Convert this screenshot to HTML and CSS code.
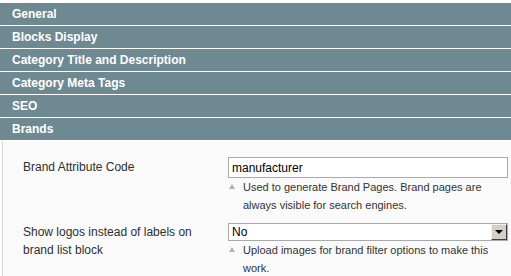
FILE: index.html
```html
<!DOCTYPE html>
<html lang="en">

<head>
    <meta charset="UTF-8">
    <title>Brands configuration</title>
    <link rel="stylesheet" href="styles.css">
</head>

<body>
    <div class="sections">
        <div class="section-head">General</div>
        <div class="section-head">Blocks Display</div>
        <div class="section-head">Category Title and Description</div>
        <div class="section-head">Category Meta Tags</div>
        <div class="section-head">SEO</div>
        <div class="section-head">Brands</div>

        <div class="section-body">
            <div class="form-row">
                <label class="field-label" for="brand-code">Brand Attribute Code</label>
                <div class="field-value">
                    <input type="text" id="brand-code" class="text-input" value="manufacturer">
                    <p class="note">Used to generate Brand Pages. Brand pages are always visible for search engines.</p>
                </div>
            </div>
            <div class="form-row">
                <label class="field-label">Show logos instead of labels on brand list block</label>
                <div class="field-value">
                    <div class="select-box">
                        <span class="select-text">No</span>
                        <span class="select-arrow"></span>
                    </div>
                    <p class="note">Upload images for brand filter options to make this work.</p>
                </div>
            </div>
        </div>
    </div>
</body>

</html>
```
FILE: styles.css
```css
body {
    margin: 0;
    padding: 0;
    font-family: "Liberation Sans", Arial, sans-serif;
    font-size: 12px;
    background-color: #ffffff;
    color: #2f2f2f;
    overflow: hidden;
}

.sections {
    margin-top: 3px;
}

.section-head {
    height: 22px;
    line-height: 22px;
    padding-left: 12px;
    background-color: #6f8992;
    border-bottom: 1px solid #ffffff;
    color: #ffffff;
    font-weight: bold;
    font-size: 12px;
}

.section-body {
    margin-left: 2px;
    border-left: 1px solid #d6d6d6;
    background-color: #fafafa;
    padding: 16px 0 10px 20px;
}

.form-row {
    display: grid;
    grid-template-columns: 205px 280px;
    margin-bottom: 8px;
}

.field-label {
    line-height: 18px;
    padding-top: 1px;
    padding-right: 14px;
}

.form-row:first-child .field-label {
    padding-top: 1px;
}

.text-input {
    display: block;
    box-sizing: border-box;
    width: 280px;
    height: 21px;
    margin: 0;
    padding: 0 3px;
    border: 1px solid #aaaaaa;
    background-color: #ffffff;
    font-family: "Liberation Sans", Arial, sans-serif;
    font-size: 12px;
    color: #000000;
}

.select-box {
    display: flex;
    align-items: center;
    box-sizing: border-box;
    width: 280px;
    height: 18px;
    border: 1px solid #aaaaaa;
    background-color: #ffffff;
    color: #000000;
    margin-top: 1px;
}

.select-text {
    flex: 1;
    padding-left: 3px;
}

.select-arrow {
    position: relative;
    box-sizing: border-box;
    width: 16px;
    height: 16px;
    background-color: #d4d0c8;
    border-top: 1px solid #f4f3ee;
    border-left: 1px solid #f4f3ee;
    border-right: 1px solid #404040;
    border-bottom: 1px solid #404040;
}

.select-arrow::after {
    content: "";
    position: absolute;
    left: 3px;
    top: 5px;
    border-left: 4px solid transparent;
    border-right: 4px solid transparent;
    border-top: 4px solid #000000;
}

.note {
    position: relative;
    margin: 0;
    padding-left: 15px;
    font-size: 11px;
    line-height: 18px;
    color: #333333;
}

.note::before {
    content: "";
    position: absolute;
    left: 1px;
    top: 6px;
    border-left: 3px solid transparent;
    border-right: 3px solid transparent;
    border-bottom: 5px solid #a9b3b7;
}
```
